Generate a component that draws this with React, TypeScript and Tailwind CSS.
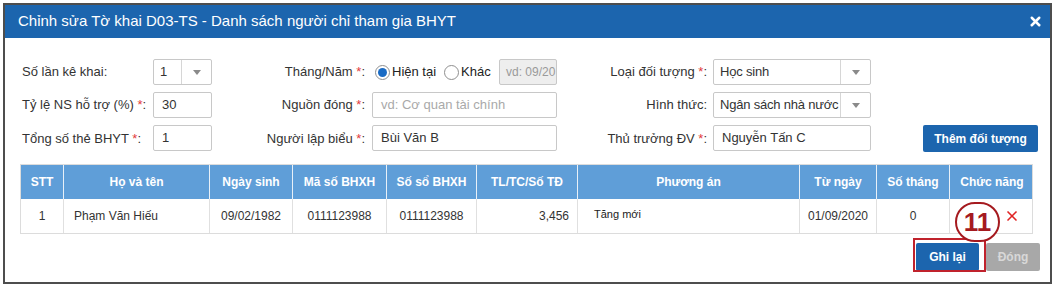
import { X } from "lucide-react";

const FONT = { fontFamily: '"Liberation Sans", Arial, sans-serif' };

function Label({ text, req }: { text: string; req?: boolean }) {
  return (
    <span className="whitespace-nowrap">
      {text}
      {req && (
        <>
          {" "}
          <span className="text-[#e23b3b]">*</span>:
        </>
      )}
    </span>
  );
}

function Select({ value, width }: { value: string; width: string }) {
  return (
    <div className={`flex h-[26px] ${width} items-stretch rounded-[2px] border border-[#c8c8c8] bg-white`}>
      <div className="flex min-w-0 flex-1 items-center overflow-hidden whitespace-nowrap pl-[6px] text-[13px] tracking-[-0.2px] text-[#333]">
        {value}
      </div>
      <div className="flex w-[30px] shrink-0 items-center justify-center border-l border-[#d6d6d6]">
        <span className="h-0 w-0 border-x-[4px] border-t-[5px] border-x-transparent border-t-[#8a8a8a]" />
      </div>
    </div>
  );
}

function Input({ value, placeholder }: { value?: string; placeholder?: string }) {
  return (
    <div className="flex h-[26px] w-full items-center rounded-[2px] border border-[#c8c8c8] bg-white pl-[8px] text-[13px]">
      {value ? <span className="text-[#333]">{value}</span> : <span className="text-[#a9a9a9]">{placeholder}</span>}
    </div>
  );
}

function Radio({ checked, label }: { checked?: boolean; label: string }) {
  return (
    <div className="flex items-center gap-[2px]">
      <span className="flex h-[15px] w-[15px] items-center justify-center rounded-full border border-[#8f8f8f] bg-white">
        {checked && <span className="h-[9px] w-[9px] rounded-full bg-[#1a6bc4]" />}
      </span>
      <span className="text-[13px] text-[#222]">{label}</span>
    </div>
  );
}

const COLS = [
  { title: "STT", w: "w-[42px]" },
  { title: "Họ và tên", w: "w-[146px]" },
  { title: "Ngày sinh", w: "w-[83px]" },
  { title: "Mã số BHXH", w: "w-[94px]" },
  { title: "Số sổ BHXH", w: "w-[90px]" },
  { title: "TL/TC/Số TĐ", w: "w-[101px]" },
  { title: "Phương án", w: "w-[222px]" },
  { title: "Từ ngày", w: "w-[77px]" },
  { title: "Số tháng", w: "w-[73px]" },
  { title: "Chức năng", w: "w-[85px]" },
];

export default function App() {
  return (
    <div className="h-[289px] w-[1055px] bg-white p-[3px]" style={FONT}>
      <div className="relative flex h-[281px] flex-col border-2 border-[#4d4d4d] bg-white">
        {/* header */}
        <div className="flex h-[33px] shrink-0 items-center justify-between bg-[#1c65ae] pl-[13px] pr-[7px]">
          <span className="text-[15px] text-white">Chỉnh sửa Tờ khai D03-TS - Danh sách người chỉ tham gia BHYT</span>
          <X className="h-[15px] w-[15px] text-white" strokeWidth={4} />
        </div>

        {/* form */}
        <div className="grid grid-cols-[131px_59px_160px_185px_156px_158px_52px_115px] gap-y-[7px] pl-[17px] pt-[21px] text-[13px] text-[#333]">
          <div className="flex items-center">
            <Label text="Số lần kê khai:" />
          </div>
          <Select value="1" width="w-[59px]" />
          <div className="flex items-center justify-end pr-[7px]">
            <Label text="Tháng/Năm" req />
          </div>
          <div className="flex items-center">
            <div className="flex items-center gap-[8px] pl-[3px]">
              <Radio checked label="Hiện tại" />
              <Radio label="Khác" />
            </div>
            <div className="ml-auto flex h-[26px] w-[58px] items-center overflow-hidden whitespace-nowrap rounded-[2px] border border-[#c8c8c8] bg-[#eeeeee] pl-[6px] text-[12px] text-[#9a9a9a]">
              vd: 09/20
            </div>
          </div>
          <div className="flex items-center justify-end pr-[6px]">
            <Label text="Loại đối tượng" req />
          </div>
          <Select value="Học sinh" width="w-[158px]" />
          <div />
          <div />

          <div className="flex items-center">
            <Label text="Tỷ lệ NS hỗ trợ (%)" req />
          </div>
          <Input value="30" />
          <div className="flex items-center justify-end pr-[7px]">
            <Label text="Nguồn đóng" req />
          </div>
          <Input placeholder="vd: Cơ quan tài chính" />
          <div className="flex items-center justify-end pr-[6px]">
            <Label text="Hình thức:" />
          </div>
          <Select value="Ngân sách nhà nước" width="w-[158px]" />
          <div />
          <div />

          <div className="flex items-center">
            <Label text="Tổng số thẻ BHYT" req />
          </div>
          <Input value="1" />
          <div className="flex items-center justify-end pr-[7px]">
            <Label text="Người lập biểu" req />
          </div>
          <Input value="Bùi Văn B" />
          <div className="flex items-center justify-end pr-[6px]">
            <Label text="Thủ trưởng ĐV" req />
          </div>
          <Input value="Nguyễn Tấn C" />
          <div />
          <button className="h-[27px] rounded-[2px] bg-[#1c65ae] text-[12px] font-bold text-white">Thêm đối tượng</button>
        </div>

        {/* table */}
        <div className="ml-[15px] mt-[12px] w-[1013px] border border-[#dcdcdc]">
          <div className="flex h-[34px] bg-[#5f9ed8]">
            {COLS.map((c, i) => (
              <div
                key={c.title}
                className={`${c.w} flex shrink-0 items-center justify-center text-[12px] font-bold text-white ${i > 0 ? "border-l border-[#e8f0f8]" : ""}`}
              >
                {c.title}
              </div>
            ))}
          </div>
          <div className="flex h-[34px] text-[12px] text-[#333]">
            <div className="flex w-[42px] shrink-0 items-center justify-center">1</div>
            <div className="flex w-[146px] shrink-0 items-center border-l border-[#e0e0e0] pl-[10px]">Phạm Văn Hiếu</div>
            <div className="flex w-[83px] shrink-0 items-center justify-center border-l border-[#e0e0e0]">09/02/1982</div>
            <div className="flex w-[94px] shrink-0 items-center justify-center border-l border-[#e0e0e0]">0111123988</div>
            <div className="flex w-[90px] shrink-0 items-center justify-center border-l border-[#e0e0e0]">0111123988</div>
            <div className="flex w-[101px] shrink-0 items-center justify-end border-l border-[#e0e0e0] pr-[8px]">3,456</div>
            <div className="flex w-[222px] shrink-0 items-center border-l border-[#e0e0e0] pb-[4px] pl-[16px] text-[11px] text-[#222]">
              Tăng mới
            </div>
            <div className="flex w-[77px] shrink-0 items-center justify-center border-l border-[#e0e0e0]">01/09/2020</div>
            <div className="flex w-[73px] shrink-0 items-center justify-center border-l border-[#e0e0e0]">0</div>
            <div className="flex w-[85px] shrink-0 items-center justify-end border-l border-[#e0e0e0] pr-[14px]">
              <X className="h-[16px] w-[16px] text-[#e02424]" strokeWidth={2.5} />
            </div>
          </div>
        </div>

        {/* footer buttons */}
        <div className="mt-[9px] flex justify-end gap-[7px] pr-[10px]">
          <button className="h-[28px] w-[63px] rounded-[2px] bg-[#1c65ae] text-[12px] font-bold text-white">Ghi lại</button>
          <button className="h-[28px] w-[54px] rounded-[2px] bg-[#a8a8a8] text-[12px] font-bold text-[#d8d8d8]">Đóng</button>
        </div>

        {/* annotation overlays */}
        <div className="absolute left-[908px] top-[233px] h-[34px] w-[73px] border-2 border-[#c0222c]" />
        <div className="absolute left-[950px] top-[197px] flex h-[40px] w-[45px] items-center justify-center rounded-full border-2 border-[#a51a1f] bg-white text-[26px] font-bold leading-none text-[#a51a1f]">
          11
        </div>
      </div>
    </div>
  );
}
